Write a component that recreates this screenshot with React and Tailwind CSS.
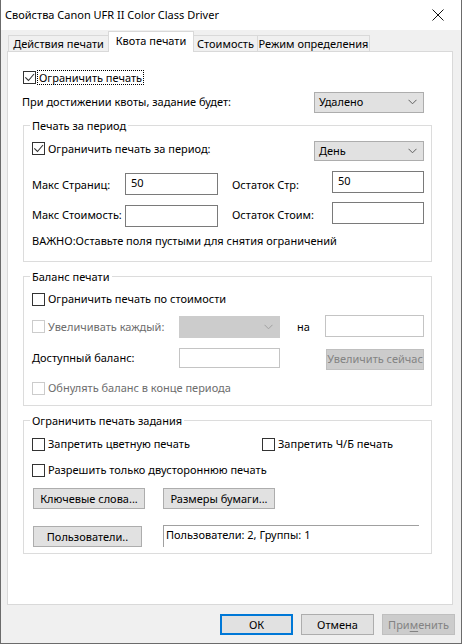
import React from "react";

const Check = ({ checked, disabled }) => (
  <span
    className={`w-[13px] h-[13px] shrink-0 border bg-white flex items-center justify-center ${
      disabled ? "border-[#cccccc]" : "border-[#333333]"
    }`}
  >
    {checked && (
      <svg width="11" height="11" viewBox="0 0 11 11">
        <path d="M1.3 5.3 L4.5 8.5 L10 2" fill="none" stroke="#333333" strokeWidth="1.1" />
      </svg>
    )}
  </span>
);

const Chevron = ({ color = "#606060" }) => (
  <svg width="9" height="6" viewBox="0 0 9 6">
    <path d="M0.5 0.8 L4.5 4.8 L8.5 0.8" fill="none" stroke={color} strokeWidth="1" />
  </svg>
);

const Select = ({ value, className, disabled }) => (
  <div
    className={`flex items-center justify-between pl-[4px] pr-[6px] border ${
      disabled ? "bg-[#cccccc] border-[#cccccc]" : "bg-[#e1e1e1] border-[#adadad]"
    } ${className}`}
  >
    <span>{value}</span>
    <Chevron color={disabled ? "#a0a0a0" : "#606060"} />
  </div>
);

const Input = ({ value, className, light }) => (
  <div
    className={`bg-white border pl-[5px] pt-[2px] leading-[14px] ${
      light ? "border-[#c4c4c4]" : "border-[#7a7a7a]"
    } ${className}`}
  >
    {value}
  </div>
);

const Btn = ({ children, className, disabled, primary }) => (
  <div
    className={`flex items-center justify-center ${
      disabled
        ? "bg-[#cccccc] border border-[#bfbfbf] text-[#838383]"
        : primary
        ? "bg-[#e1e1e1] border-2 border-[#0078d7]"
        : "bg-[#e1e1e1] border border-[#adadad]"
    } ${className}`}
  >
    {children}
  </div>
);

const Group = ({ title, className, children }) => (
  <div className={`w-[409px] border border-[#dcdcdc] flex flex-col ${className}`}>
    <div className="-mt-[8px] ml-[6px] px-[2px] h-[16px] leading-[16px] bg-white w-fit">{title}</div>
    {children}
  </div>
);

const Tab = ({ children, className, active }) => (
  <div
    className={`flex items-center justify-center border border-[#d9d9d9] ${
      active
        ? "bg-white border-b-0 h-[21px] -mb-px relative z-10 pb-[2px]"
        : "bg-[#f0f0f0] border-b-0 h-[16px]"
    } ${className}`}
  >
    {children}
  </div>
);

export default function App() {
  return (
    <div className="w-[462px] h-[644px] bg-[#f0f0f0] border-x border-b border-[#6b6b6b] font-['Noto_Sans',sans-serif] text-[11px] text-black flex flex-col leading-[16px] overflow-hidden whitespace-nowrap">
      {/* title bar */}
      <div className="h-[30px] bg-white flex items-center justify-between pl-[4px] pr-[17px] shrink-0">
        <span className="text-[11px]">Свойства Canon UFR II Color Class Driver</span>
        <svg width="12" height="12" viewBox="0 0 12 12">
          <path d="M0.5 0.5 L11.5 11.5 M11.5 0.5 L0.5 11.5" stroke="#111" strokeWidth="1" />
        </svg>
      </div>

      {/* tabs */}
      <div className="flex items-end ml-[6px] mt-[2px] h-[19px] shrink-0">
        <Tab className="w-[101px] ml-px">Действия печати</Tab>
        <Tab active className="w-[86px] -ml-px">Квота печати</Tab>
        <Tab className="w-[65px] -ml-px">Стоимость</Tab>
        <Tab className="w-[113px] -ml-px">Режим определения</Tab>
      </div>

      {/* panel */}
      <div className="ml-[6px] w-[446px] h-[554px] bg-white border border-[#d9d9d9] flex flex-col pl-[15px] pt-[18px] shrink-0">
        <div className="flex items-center h-[14px] gap-[1px]">
          <Check checked />
          <span className="border border-dotted border-black h-[15px] leading-[13px] px-[1px]">
            Ограничить печать
          </span>
        </div>

        <div className="flex items-center justify-between w-[401px] mt-[7px] h-[22px]">
          <span className="-ml-[1px]">При достижении квоты, задание будет:</span>
          <Select value="Удалено" className="w-[110px] h-[21px]" />
        </div>

        <Group title="Печать за период" className="mt-[12px] h-[137px]">
          <div className="flex items-center justify-between pl-[8px] pr-[7px] mt-[6px] h-[21px]">
            <div className="flex items-center gap-[3px] -mt-[4px]">
              <Check checked />
              <span>Ограничить печать за период:</span>
            </div>
            <Select value="День" className="w-[110px] h-[20px]" />
          </div>

          <div className="flex items-start pl-[8px] mt-[10px] h-[23px]">
            <span className="w-[93px] mt-[6px]">Макс Страниц:</span>
            <Input value="50" className="w-[93px] h-[22px] mt-[2px]" />
            <span className="w-[100px] ml-[14px] mt-[6px]">Остаток Стр:</span>
            <Input value="50" className="w-[92px] h-[22px]" />
          </div>

          <div className="flex items-start pl-[8px] mt-[8px] h-[25px]">
            <span className="w-[93px] mt-[5px]">Макс Стоимость:</span>
            <Input value="" className="w-[93px] h-[22px] mt-[3px]" />
            <span className="w-[100px] ml-[14px] mt-[5px]">Остаток Стоим:</span>
            <Input value="" className="w-[92px] h-[22px]" />
          </div>

          <div className="pl-[8px] mt-[6px]">ВАЖНО:Оставьте поля пустыми для снятия ограничений</div>
        </Group>

        <Group title="Баланс печати" className="mt-[14px] h-[130px]">
          <div className="flex items-center gap-[3px] pl-[8px] mt-[7px] h-[14px]">
            <Check />
            <span>Ограничить печать по стоимости</span>
          </div>

          <div className="flex items-center pl-[8px] mt-[9px] h-[23px]">
            <div className="flex items-center gap-[3px] w-[147px] text-[#6d6d6d]">
              <Check disabled />
              <span>Увеличивать каждый:</span>
            </div>
            <Select value="" disabled className="w-[101px] h-[22px]" />
            <span className="ml-[17px] w-[28px]">на</span>
            <Input value="" light className="w-[99px] h-[22px] -mt-[1px]" />
          </div>

          <div className="flex items-center pl-[8px] mt-[10px] h-[22px]">
            <span className="w-[147px] -mt-[3px]">Доступный баланс:</span>
            <Input value="" light className="w-[101px] h-[20px] -mt-[3px]" />
            <Btn disabled className="w-[98px] h-[21px] ml-[46px]">Увеличить сейчас</Btn>
          </div>

          <div className="flex items-center gap-[3px] pl-[8px] mt-[11px] h-[14px] text-[#6d6d6d]">
            <Check disabled />
            <span>Обнулять баланс в конце периода</span>
          </div>
        </Group>

        <Group title="Ограничить печать задания" className="mt-[14px] h-[134px]">
          <div className="flex items-center pl-[8px] mt-[8px] h-[14px]">
            <div className="flex items-center gap-[3px] w-[230px]">
              <Check />
              <span>Запретить цветную печать</span>
            </div>
            <div className="flex items-center gap-[3px]">
              <Check />
              <span>Запретить Ч/Б печать</span>
            </div>
          </div>

          <div className="flex items-center gap-[3px] pl-[8px] mt-[12px] h-[14px]">
            <Check />
            <span>Разрешить только двустороннюю печать</span>
          </div>

          <div className="flex items-center pl-[9px] mt-[11px] gap-[18px]">
            <Btn className="w-[112px] h-[21px]">Ключевые слова...</Btn>
            <Btn className="w-[112px] h-[21px]">Размеры бумаги...</Btn>
          </div>

          <div className="flex items-start pl-[9px] mt-[16px]">
            <Btn className="w-[109px] h-[21px] mt-[1px]">Пользователи..</Btn>
            <div className="ml-[21px] w-[256px] h-[22px] border-t border-l border-[#a0a0a0] pl-[2px] pt-[1px]">
              Пользователи: 2, Группы: 1
            </div>
          </div>
        </Group>
      </div>

      {/* bottom buttons */}
      <div className="flex justify-end gap-[8px] pr-[6px] mt-[9px]">
        <Btn primary className="w-[73px] h-[21px]">ОК</Btn>
        <Btn className="w-[73px] h-[21px]">Отмена</Btn>
        <Btn disabled className="w-[73px] h-[21px]">
          <span>
            При<span className="underline underline-offset-2">м</span>енить
          </span>
        </Btn>
      </div>
    </div>
  );
}
